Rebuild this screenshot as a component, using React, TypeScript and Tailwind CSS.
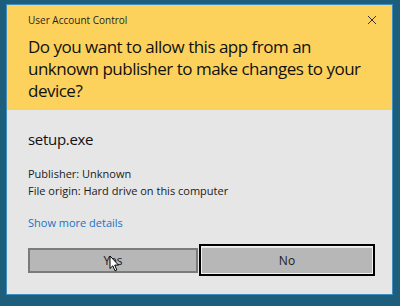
import { FC } from 'react'

const font = { fontFamily: '"Open Sans", "Noto Sans", sans-serif' }

const Cursor: FC = () => (
  <svg
    className="absolute left-[109px] top-[255px]"
    width="11"
    height="18"
    viewBox="0 0 11 18"
  >
    <path
      d="M1 1 L1 13.5 L3.8 10.8 L6 15.8 L7.8 15 L5.7 10.1 L9.5 10.1 Z"
      fill="#fff"
      stroke="#000"
      strokeWidth="1"
      strokeLinejoin="round"
    />
  </svg>
)

const App: FC = () => {
  return (
    <div
      className="relative w-[400px] h-[306px] bg-[#1c5e7b] pt-[4px] pl-[6px]"
      style={font}
    >
      <div className="w-[387px] h-[291px] border border-[#3d8ebf] flex flex-col">
        <div className="bg-[#fdd25c] pl-[21px] pr-[14px] pt-[8px] pb-[8px] h-[105px]">
          <div className="flex items-center justify-between">
            <p className="text-[10px] leading-[14px] text-[#1e1e1e]">User Account Control</p>
            <svg width="10" height="10" viewBox="0 0 10 10" className="mr-[1px]">
              <path d="M1 1 L9 9 M9 1 L1 9" stroke="#333" strokeWidth="1" />
            </svg>
          </div>
          <p className="mt-[9px] text-[17px] leading-[22px] tracking-[-0.5px] text-[#111] w-[345px]">
            Do you want to allow this app from an unknown publisher to make changes to your
            device?
          </p>
        </div>
        <div className="flex-1 bg-[#e6e6e6] pl-[21px] pr-[20px]">
          <p className="mt-[18px] text-[15px] leading-[22px] tracking-[-0.3px] text-[#111]">
            setup.exe
          </p>
          <p className="mt-[15px] text-[11px] leading-[17px] text-[#1a1a1a]">Publisher: Unknown</p>
          <p className="text-[11px] leading-[17px] text-[#1a1a1a]">
            File origin: Hard drive on this computer
          </p>
          <p className="mt-[15px] text-[11px] leading-[17px] text-[#1a72c4]">Show more details</p>
          <div className="mt-[17px] grid grid-cols-2 gap-[4px]">
            <div className="h-[25px] border-2 border-[#7b7b7b] bg-[#b7b7b7] flex items-center justify-center text-[12px] text-[#1a1a1a]">
              Yes
            </div>
            <div className="relative h-[25px] bg-[#b7b7b7] flex items-center justify-center text-[12px] text-[#1a1a1a]">
              No
              <div className="absolute -inset-x-[3px] -top-[4px] -bottom-[3px] border-2 border-black">
                <div className="w-full h-full border border-[#f2f2f2]" />
              </div>
            </div>
          </div>
        </div>
      </div>
      <Cursor />
    </div>
  )
}

export default App
